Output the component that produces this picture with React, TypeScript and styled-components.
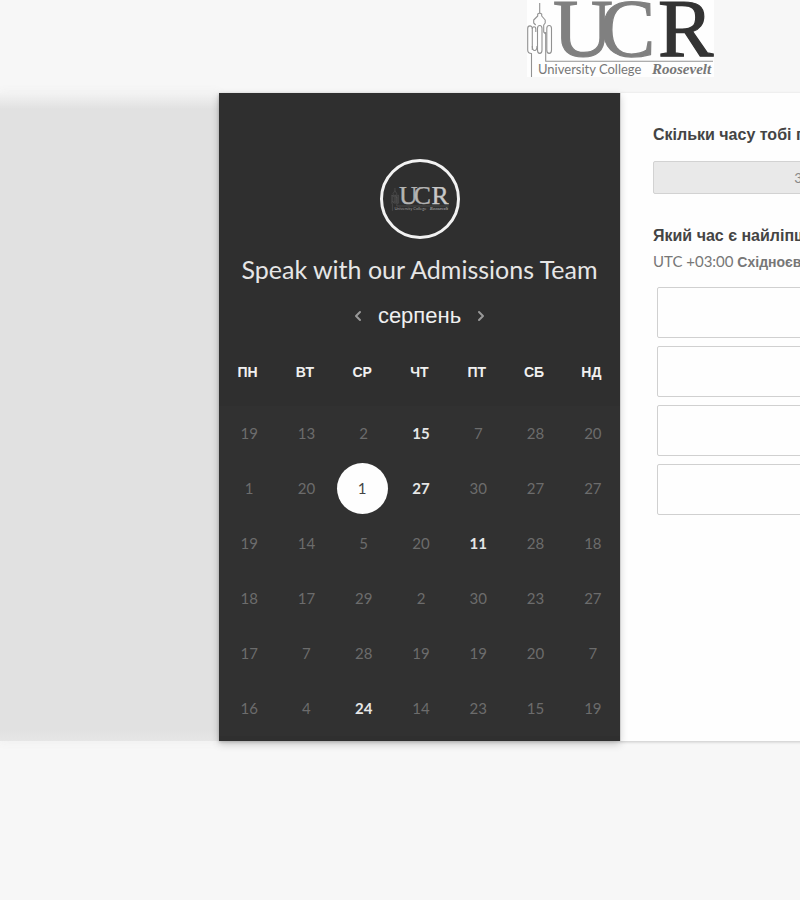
import React, { useState } from "react";
import styled, { createGlobalStyle } from "styled-components";
import { ChevronLeft, ChevronRight } from "lucide-react";

const GlobalStyle = createGlobalStyle`
  *, *::before, *::after { box-sizing: border-box; }
  body {
    margin: 0;
    background: #f7f7f7;
    overflow-x: hidden;
    font-family: "Liberation Sans", Arial, sans-serif;
    color: #444;
  }
  button { font: inherit; color: inherit; background: none; border: 0; padding: 0; cursor: pointer; }
  h1, h2, p { margin: 0; }
`;

const Page = styled.div`
  min-width: 1240px;
  overflow: hidden;
  padding-bottom: 40px;
`;

const Header = styled.header`
  display: flex;
  justify-content: center;
  padding-bottom: 16px;
`;

const BrandLink = styled.a`
  display: block;
  width: 187px;
  background: #fefefe;
`;

const LogoSvg = styled.svg`
  display: block;
  width: 100%;
  height: auto;
`;

const Stage = styled.main`
  display: flex;
`;

const Backdrop = styled.div`
  flex: 1;
  background: linear-gradient(#f3f3f3, #e1e1e1 16px, #e1e1e1 calc(100% - 12px), #e6e6e6);
  box-shadow: 0 0 10px #ededed;
`;

const Widget = styled.div`
  position: relative;
  display: grid;
  grid-template-columns: 1fr 1fr;
  flex: 0 1 802px;
  background: #fefefe;
  box-shadow: 0 1px 3px rgba(0, 0, 0, 0.2);
`;

const DatePanel = styled.section`
  display: flex;
  flex-direction: column;
  align-items: center;
  padding: 66px 0 5px;
  background: #2f2f2f;
  color: #f0f0f0;
  box-shadow: 0 3px 8px rgba(0, 0, 0, 0.2);
`;

const Avatar = styled.div`
  display: flex;
  align-items: center;
  justify-content: center;
  width: 80px;
  height: 80px;
  padding: 0 8px;
  border: 3px solid #f2f2f2;
  border-radius: 50%;
`;

const Title = styled.h1`
  margin-top: 13px;
  font: 400 25px/34px Lato, sans-serif;
  color: #e6e6e6;
  white-space: nowrap;
`;

const MonthNav = styled.div`
  display: flex;
  align-items: center;
  gap: 12px;
  margin-top: 14px;
`;

const MonthName = styled.h2`
  font-size: 22px;
  font-weight: 400;
  line-height: 32px;
`;

const ArrowButton = styled.button`
  display: flex;
  color: #999;
`;

const Calendar = styled.table`
  width: 100%;
  margin-top: 26px;
  border-collapse: collapse;
  table-layout: fixed;
`;

const Weekday = styled.th`
  height: 28px;
  padding: 0;
  font-size: 14px;
  font-weight: 700;
`;

const Spacer = styled.tbody`
  height: 20px;
`;

const DayCell = styled.td`
  height: 55px;
  padding: 0;
  text-align: center;
`;

const Dates = styled.tbody`
  background: #313131;
`;

const Day = styled.button<{ $state: "off" | "open" | "selected" }>`
  width: 51px;
  height: 51px;
  padding-left: ${(p) => (p.$state === "selected" ? 0 : 3)}px;
  border-radius: 50%;
  font: ${(p) => (p.$state === "open" ? 700 : 400)} 15px/51px Lato, sans-serif;
  color: ${(p) => ({ off: "#6c6c6c", open: "#e6e6e6", selected: "#444" })[p.$state]};
  background: ${(p) => (p.$state === "selected" ? "#fefefe" : "transparent")};
`;

const TimePanel = styled.section`
  padding: 32px;
  border-left: 1px solid #d0d0d0;
`;

const Question = styled.h2`
  font-size: 16px;
  font-weight: 700;
  line-height: 20px;
  white-space: nowrap;
`;

const Duration = styled.button`
  display: block;
  width: 100%;
  height: 33px;
  margin: 16px 0 32px;
  border: 1px solid #d2d2d2;
  border-radius: 2px;
  background: #e9e9e9;
  color: #888;
  font: 400 14px/31px Lato, "Liberation Sans", sans-serif;
`;

const Zone = styled.p`
  margin-top: 5px;
  font: 400 15px/20px Lato, sans-serif;
  color: #777;
  white-space: nowrap;
`;

const ZoneName = styled.b`
  font: 700 14px/20px "Liberation Sans", sans-serif;
`;

const Slots = styled.div`
  display: grid;
  gap: 8px;
  margin-top: 15px;
  padding: 0 4px;
`;

const Slot = styled.button`
  height: 51px;
  border: 1px solid #d0d0d0;
  border-radius: 2px;
  background: #fefefe;
  color: #666;
  font: 400 16px/49px Lato, sans-serif;
`;

type LogoProps = { letters: string; accent: string; line: string; caption: string };

function Logo({ letters, accent, line, caption }: LogoProps) {
  const serif = '"Liberation Serif", serif';
  return (
    <LogoSvg viewBox="0 0 187 77" role="img" aria-label="University College Roosevelt">
      <g fill="none" stroke={line} strokeWidth="1.1" strokeLinejoin="round">
        <path d="M12.700 3v10l-2 1v2l-4 4v3l2 2M12.700 13l2 1v2l3.500 4v3l-1.500 2v7l2 2" />
        <path d="M4.500 77V53.500C2 53.500.7 52 .7 50V28.500c0-3.500 4.600-3.500 4.600 0V50" />
        <path d="M5.300 29c0-3 3.500-3 3.500 0v3M5.300 46c0 6 4.700 6 4.700 0" />
        <path d="M10.500 47V28.500c0-4 4.500-4 4.500 0V50c0 4.500-4.500 4.500-4.500 0z" />
        <path d="M19.800 50V28.500c0-4 4.700-4 4.700 0V50c0 4.500-4.700 4.500-4.700 0z" />
        <path d="M18.700 32v29.300H186" />
      </g>
      <g fontFamily={serif} fontSize="83" strokeWidth="1.2">
        <text x="26" y="56" fill={letters} stroke={letters}>U</text>
        <text x="73" y="56" fill={letters} stroke={letters}>C</text>
        <text x="131" y="56" fill={accent} stroke={accent}>R</text>
      </g>
      <text x="11" y="74" fontFamily="Lato, sans-serif" fontSize="13" fill={caption}>
        University College
      </text>
      <text x="125" y="74" fontFamily={serif} fontSize="15" fontStyle="italic" fontWeight="700" fill={caption}>
        Roosevelt
      </text>
    </LogoSvg>
  );
}

const weekdays = ["ПН", "ВТ", "СР", "ЧТ", "ПТ", "СБ", "НД"];
const weeks = [
  [19, 13, 2, 15, 7, 28, 20],
  [1, 20, 1, 27, 30, 27, 27],
  [19, 14, 5, 20, 11, 28, 18],
  [18, 17, 29, 2, 30, 23, 27],
  [17, 7, 28, 19, 19, 20, 7],
  [16, 4, 24, 14, 23, 15, 19],
];
const openDays = ["0-3", "1-2", "1-3", "2-4", "5-2"];
const times = ["17:00", "17:30", "18:00", "18:30"];

export default function App() {
  const [selected, setSelected] = useState("1-2");

  return (
    <>
      <GlobalStyle />
      <Page>
        <Header>
          <BrandLink href="#">
            <Logo letters="#808080" accent="#333" line="#929292" caption="#777" />
          </BrandLink>
        </Header>
        <Stage>
          <Backdrop />
          <Widget>
            <DatePanel>
              <Avatar>
                <Logo letters="#b4b4b4" accent="#c8c8c8" line="#777" caption="#999" />
              </Avatar>
              <Title>Speak with our Admissions Team</Title>
              <MonthNav>
                <ArrowButton aria-label="Попередній місяць">
                  <ChevronLeft size={16} strokeWidth={3} />
                </ArrowButton>
                <MonthName>серпень</MonthName>
                <ArrowButton aria-label="Наступний місяць">
                  <ChevronRight size={16} strokeWidth={3} />
                </ArrowButton>
              </MonthNav>
              <Calendar>
                <thead>
                  <tr>
                    {weekdays.map((day) => (
                      <Weekday key={day} scope="col">{day}</Weekday>
                    ))}
                  </tr>
                </thead>
                <Spacer aria-hidden="true">
                  <tr><td colSpan={7} /></tr>
                </Spacer>
                <Dates>
                  {weeks.map((week, row) => (
                    <tr key={row}>
                      {week.map((day, col) => {
                        const id = `${row}-${col}`;
                        const open = openDays.includes(id);
                        return (
                          <DayCell key={id}>
                            <Day
                              $state={id === selected ? "selected" : open ? "open" : "off"}
                              disabled={!open}
                              onClick={() => setSelected(id)}
                            >
                              {day}
                            </Day>
                          </DayCell>
                        );
                      })}
                    </tr>
                  ))}
                </Dates>
              </Calendar>
            </DatePanel>
            <TimePanel>
              <Question>Скільки часу тобі потрібно?</Question>
              <Duration>30 хвил.</Duration>
              <Question>Який час є найліпшим?</Question>
              <Zone>
                UTC +03:00 <ZoneName>Східноєвропейський час</ZoneName>
              </Zone>
              <Slots>
                {times.map((time) => (
                  <Slot key={time}>{time}</Slot>
                ))}
              </Slots>
            </TimePanel>
          </Widget>
          <Backdrop />
        </Stage>
      </Page>
    </>
  );
}
